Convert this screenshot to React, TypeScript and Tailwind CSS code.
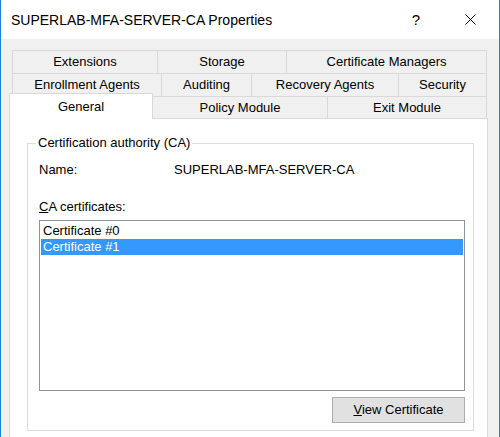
import React from "react";

const row1 = [
  { label: "Extensions", w: "w-[145px]" },
  { label: "Storage", w: "w-[129px]" },
  { label: "Certificate Managers", w: "w-[201px] border-r" },
];

const row2 = [
  { label: "Enrollment Agents", w: "w-[149px]" },
  { label: "Auditing", w: "w-[90px]" },
  { label: "Recovery Agents", w: "w-[147px]" },
  { label: "Security", w: "w-[89px] border-r" },
];

function TabRow({ tabs }: { tabs: { label: string; w: string }[] }) {
  return (
    <div className="flex h-[23px]">
      {tabs.map((t) => (
        <div
          key={t.label}
          className={`${t.w} shrink-0 h-[23px] border-t border-l border-[#d9d9d9] flex items-center justify-center`}
        >
          {t.label}
        </div>
      ))}
    </div>
  );
}

export default function App() {
  return (
    <div className="w-[500px] h-[437px] overflow-hidden flex flex-col border-x border-[#1a82d8] font-['Liberation_Sans',Arial,sans-serif] text-[13px] text-black">
      {/* title bar */}
      <div className="h-[39px] shrink-0 bg-white flex items-center pl-[10px]">
        <span className="text-[14px] pt-[1px]">SUPERLAB-MFA-SERVER-CA Properties</span>
        <span className="ml-auto text-[15px] pt-[1px]">?</span>
        <svg className="ml-[45px] mr-[23px]" width="11" height="11" viewBox="0 0 11 11">
          <path d="M0.5 0.5 L10.5 10.5 M10.5 0.5 L0.5 10.5" stroke="#000" strokeWidth="1" fill="none" />
        </svg>
      </div>

      <div className="flex-1 bg-[#f0f0f0] pt-[11px]">
        {/* tabs */}
        <div className="ml-[11px] w-[475px]">
          <TabRow tabs={row1} />
          <TabRow tabs={row2} />
          <div className="flex h-[22px] items-start">
            <div className="relative z-10 shrink-0 w-[144px] h-[26px] -mt-[3px] -ml-[3px] bg-white border-t border-x border-[#d9d9d9] flex items-start justify-center pt-[3px]">
              General
            </div>
            <div className="shrink-0 w-[174px] h-[22px] border-t border-[#d9d9d9] flex items-center justify-center">
              Policy Module
            </div>
            <div className="shrink-0 w-[160px] h-[22px] border-t border-x border-[#d9d9d9] flex items-center justify-center">
              Exit Module
            </div>
          </div>
        </div>

        {/* page */}
        <div className="ml-[8px] w-[479px] h-[330px] bg-white border border-[#d9d9d9] pt-[24px] pl-[17px] pr-[13px]">
          <div className="relative h-[288px] border border-[#dcdcdc] pt-[18px] pl-[11px] pr-[8px]">
            <span className="absolute -top-[9px] left-[8px] bg-white px-[2px] leading-[16px]">
              Certification authority (CA)
            </span>

            <div className="flex leading-[16px]">
              <span className="w-[135px]">Name:</span>
              <span>SUPERLAB-MFA-SERVER-CA</span>
            </div>

            <div className="mt-[21px] leading-[16px]">
              <span className="underline">C</span>A certificates:
            </div>

            <div className="mt-[5px] h-[171px] border border-[#8e9299] pt-[2px] px-[1px]">
              <div className="h-[16px] leading-[16px] pl-[2px]">Certificate #0</div>
              <div className="h-[16px] leading-[16px] pl-[2px] bg-[#3399ff] text-white">Certificate #1</div>
            </div>

            <div className="flex justify-end mt-[6px]">
              <button className="w-[133px] h-[26px] bg-[#e1e1e1] border border-[#adadad] flex items-center justify-center">
                <span>
                  <span className="underline">V</span>iew Certificate
                </span>
              </button>
            </div>
          </div>
        </div>
      </div>
    </div>
  );
}
